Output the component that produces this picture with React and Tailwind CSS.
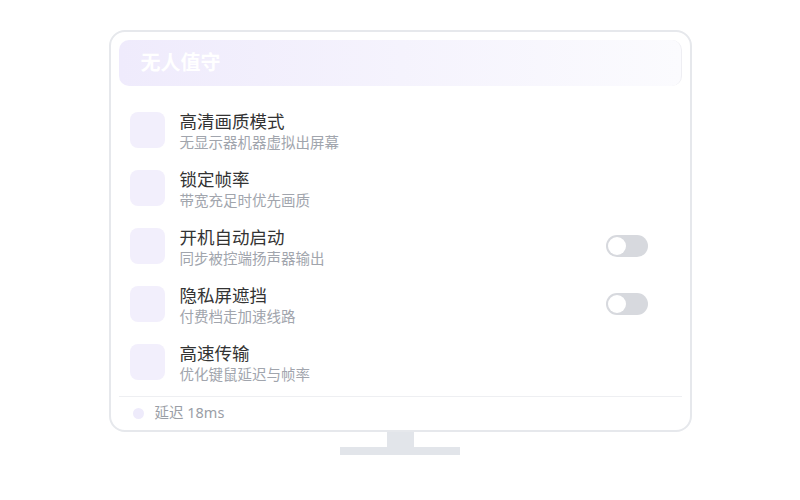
import React from "react";

const rows = [
  { t: "高清画质模式", s: "无显示器机器虚拟出屏幕", toggle: false },
  { t: "锁定帧率", s: "带宽充足时优先画质", toggle: false },
  { t: "开机自动启动", s: "同步被控端扬声器输出", toggle: true },
  { t: "隐私屏遮挡", s: "付费档走加速线路", toggle: true },
  { t: "高速传输", s: "优化键鼠延迟与帧率", toggle: false },
];

function Toggle() {
  return (
    <div className="w-[42px] h-[22px] rounded-full bg-[#d7d9de] p-[2px] flex items-center">
      <div className="w-[18px] h-[18px] rounded-full bg-white" />
    </div>
  );
}

export default function App() {
  return (
    <div
      className="w-[800px] h-[500px] bg-white flex flex-col items-center pt-[30px]"
      style={{ fontFamily: '"Noto Sans", "Noto Sans CJK SC", sans-serif' }}
    >
      <div className="w-[583px] h-[402px] rounded-[16px] border-2 border-[#e6e8ec] bg-white px-[8px] pt-[8px] flex flex-col">
        <div className="h-[46px] rounded-[10px] bg-gradient-to-r from-[#efebfc] to-[#fbfbfe] flex items-center pl-[22px] border-r border-[#eeeef3]">
          <span className="text-[20px] font-bold text-white leading-none">无人值守</span>
        </div>
        <div className="flex flex-col pt-[15px] px-[11px]">
          {rows.map((r) => (
            <div key={r.t} className="h-[58px] flex items-center">
              <div className="w-[35px] h-[36px] rounded-[8px] bg-[#f2effc]" />
              <div className="flex flex-col ml-[15px] mt-[2px] flex-1">
                <span className="text-[17.5px] leading-[22px] text-[#333333]">{r.t}</span>
                <span className="text-[14.5px] leading-[20px] text-[#a1a5ad]">{r.s}</span>
              </div>
              {r.toggle && (
                <div className="mr-[23px]">
                  <Toggle />
                </div>
              )}
            </div>
          ))}
        </div>
        <div className="mt-[5px] border-t border-[#eeeff2] h-[33px] flex items-center pl-[14px]">
          <div className="w-[11px] h-[11px] rounded-full bg-[#eeebfb]" />
          <span className="ml-[11px] text-[14.5px] text-[#9a9ea6]">延迟 18ms</span>
        </div>
      </div>
      <div className="w-[27px] h-[15px] bg-[#e2e5ea]" />
      <div className="w-[120px] h-[8px] bg-[#e2e5ea]" />
    </div>
  );
}
